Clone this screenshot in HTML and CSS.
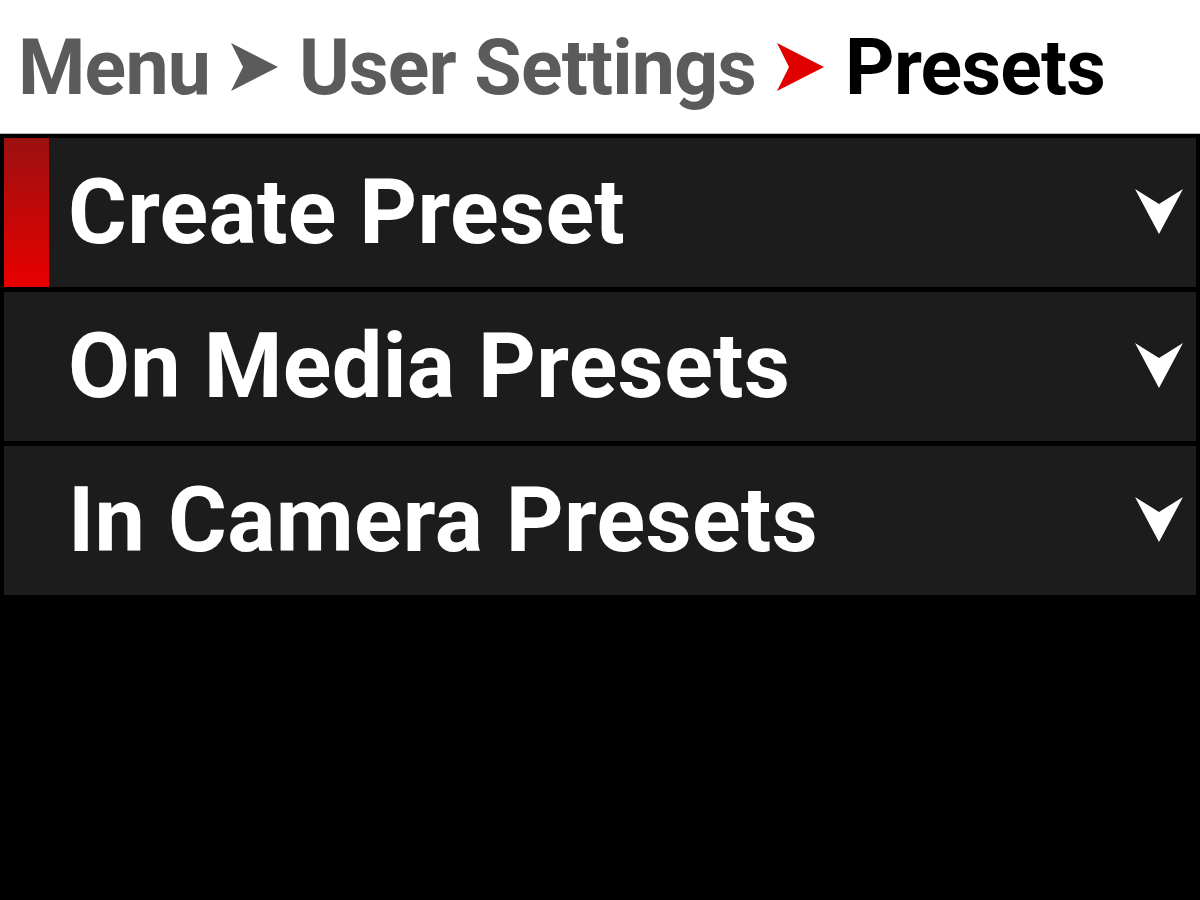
FILE: index.html
```html
<!DOCTYPE html>
<html lang="en">
<head>
  <meta charset="UTF-8">
  <title>Presets</title>
  <link rel="stylesheet" href="styles.css">
</head>
<body>
  <!-- Breadcrumb -->
  <div class="header">
    <span class="crumb">Menu</span>
    <svg class="sep" viewBox="0 0 47 48"><path d="M0 0 L47 24 L0 48 L12 24 Z" fill="#5b5b5b"/></svg>
    <span class="crumb">User Settings</span>
    <svg class="sep" viewBox="0 0 47 48"><path d="M0 0 L47 24 L0 48 L12 24 Z" fill="#e00000"/></svg>
    <span class="crumb current">Presets</span>
  </div>

  <!-- Menu list -->
  <div class="list">
    <div class="row selected">
      <div class="marker"></div>
      <span class="label">Create Preset</span>
      <svg class="chev" viewBox="0 0 48 45"><path d="M0 0 L24 15 L48 0 L24 45 Z" fill="#fff"/></svg>
    </div>
    <div class="row">
      <div class="marker"></div>
      <span class="label">On Media Presets</span>
      <svg class="chev" viewBox="0 0 48 45"><path d="M0 0 L24 15 L48 0 L24 45 Z" fill="#fff"/></svg>
    </div>
    <div class="row">
      <div class="marker"></div>
      <span class="label">In Camera Presets</span>
      <svg class="chev" viewBox="0 0 48 45"><path d="M0 0 L24 15 L48 0 L24 45 Z" fill="#fff"/></svg>
    </div>
  </div>
</body>
</html>
```

FILE: styles.css
```css
* {
  margin: 0;
  padding: 0;
  box-sizing: border-box;
}

html, body {
  height: 100%;
  background: black;
  font-family: 'Roboto', 'Liberation Sans', sans-serif;
  overflow: hidden;
}

.header {
  height: 134px;
  background: white;
  display: flex;
  align-items: center;
  gap: 21px;
  padding: 0 18px;
  border-bottom: 1px solid #bbb;
}

.crumb {
  font-size: 77px;
  font-weight: bold;
  letter-spacing: -0.8px;
  color: #5b5b5b;
  line-height: 1;
  margin-top: 4px;
}

.crumb.current {
  color: black;
}

.sep {
  width: 47px;
  height: 48px;
  flex-shrink: 0;
}

.list {
  display: flex;
  flex-direction: column;
  gap: 5px;
  padding: 4px 4px 0 4px;
}

.row {
  height: 149px;
  background: #1c1c1c;
  display: flex;
  align-items: center;
}

.marker {
  width: 45px;
  height: 100%;
  flex-shrink: 0;
}

.row.selected .marker {
  background: linear-gradient(to bottom, #9c1010, #e80000);
}

.label {
  flex: 1;
  padding-left: 19px;
  font-size: 90px;
  font-weight: bold;
  letter-spacing: 0.3px;
  color: white;
  line-height: 1;
}

.chev {
  width: 48px;
  height: 45px;
  margin-right: 13px;
  margin-top: -3px;
}
```
